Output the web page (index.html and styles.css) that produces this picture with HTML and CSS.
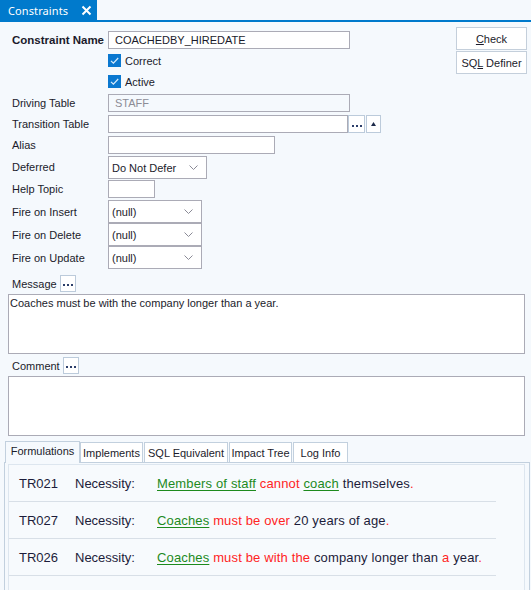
FILE: index.html
```html
<!DOCTYPE html>
<html>
<head>
<meta charset="utf-8">
<link rel="stylesheet" href="styles.css">
</head>
<body>
<div class="tabbar">
  <div class="doc-tab"><span class="doc-title">Constraints</span>
    <svg class="close" width="11" height="11" viewBox="0 0 11 11"><path d="M1.5 1.5 L9.5 9.5 M9.5 1.5 L1.5 9.5" stroke="#fff" stroke-width="2"/></svg>
  </div>
</div>
<div class="page">
  <div class="top">
    <div class="form">
      <div class="row r-name">
        <span class="label bold">Constraint Name</span>
        <div class="input w242">COACHEDBY_HIREDATE</div>
      </div>
      <div class="row r-check">
        <span class="label"></span>
        <span class="cb"><svg width="13" height="13" viewBox="0 0 13 13"><path d="M3 6.8 L5.4 9.2 L10.2 4" fill="none" stroke="#d8ecfb" stroke-width="1.2"/></svg></span>
        <span class="cb-text">Correct</span>
      </div>
      <div class="row r-check">
        <span class="label"></span>
        <span class="cb"><svg width="13" height="13" viewBox="0 0 13 13"><path d="M3 6.8 L5.4 9.2 L10.2 4" fill="none" stroke="#d8ecfb" stroke-width="1.2"/></svg></span>
        <span class="cb-text">Active</span>
      </div>
      <div class="row r-input first-input">
        <span class="label">Driving Table</span>
        <div class="input w242 disabled">STAFF</div>
      </div>
      <div class="row r-input">
        <span class="label">Transition Table</span>
        <div class="input w240"></div>
        <div class="ellipsis tall"><svg width="10" height="2" viewBox="0 0 10 2"><rect x="0" y="0" width="2" height="2" fill="#2c3e6a"/><rect x="4" y="0" width="2" height="2" fill="#2c3e6a"/><rect x="8" y="0" width="2" height="2" fill="#2c3e6a"/></svg></div>
        <div class="updown"><svg width="5" height="4" viewBox="0 0 5 4"><path d="M2.5 0 L5 4 L0 4 Z" fill="#1d2a4a"/></svg></div>
      </div>
      <div class="row r-input r-alias">
        <span class="label">Alias</span>
        <div class="input w167"></div>
      </div>
      <div class="row r-defer">
        <span class="label">Deferred</span>
        <div class="select w99"><span>Do Not Defer</span><svg class="chev" width="9" height="5" viewBox="0 0 9 5"><path d="M0.5 0.5 L4.5 4.5 L8.5 0.5" fill="none" stroke="#8a8a96" stroke-width="1"/></svg></div>
      </div>
      <div class="row r-help">
        <span class="label">Help Topic</span>
        <div class="input w47"></div>
      </div>
      <div class="row r-select">
        <span class="label">Fire on Insert</span>
        <div class="select w94"><span>(null)</span><svg class="chev" width="9" height="5" viewBox="0 0 9 5"><path d="M0.5 0.5 L4.5 4.5 L8.5 0.5" fill="none" stroke="#8a8a96" stroke-width="1"/></svg></div>
      </div>
      <div class="row r-select">
        <span class="label">Fire on Delete</span>
        <div class="select w94"><span>(null)</span><svg class="chev" width="9" height="5" viewBox="0 0 9 5"><path d="M0.5 0.5 L4.5 4.5 L8.5 0.5" fill="none" stroke="#8a8a96" stroke-width="1"/></svg></div>
      </div>
      <div class="row r-select">
        <span class="label">Fire on Update</span>
        <div class="select w94"><span>(null)</span><svg class="chev" width="9" height="5" viewBox="0 0 9 5"><path d="M0.5 0.5 L4.5 4.5 L8.5 0.5" fill="none" stroke="#8a8a96" stroke-width="1"/></svg></div>
      </div>
    </div>
    <div class="side">
      <div class="btn"><span><u>C</u>heck</span></div>
      <div class="btn"><span>SQ<u>L</u> Definer</span></div>
    </div>
  </div>

  <div class="memo">
    <div class="memo-head">
      <span class="memo-label">Message</span>
      <div class="ellipsis small"><svg width="10" height="2" viewBox="0 0 10 2"><rect x="0" y="0" width="2" height="2" fill="#2c3e6a"/><rect x="4" y="0" width="2" height="2" fill="#2c3e6a"/><rect x="8" y="0" width="2" height="2" fill="#2c3e6a"/></svg></div>
    </div>
    <div class="textarea">Coaches must be with the company longer than a year.</div>
    <div class="memo-head second">
      <span class="memo-label">Comment</span>
      <div class="ellipsis small"><svg width="10" height="2" viewBox="0 0 10 2"><rect x="0" y="0" width="2" height="2" fill="#2c3e6a"/><rect x="4" y="0" width="2" height="2" fill="#2c3e6a"/><rect x="8" y="0" width="2" height="2" fill="#2c3e6a"/></svg></div>
    </div>
    <div class="textarea"></div>
  </div>

  <div class="tabs">
    <div class="tab active t1">Formulations</div>
    <div class="tab t2">Implements</div>
    <div class="tab t3">SQL Equivalent</div>
    <div class="tab t4">Impact Tree</div>
    <div class="tab t5">Log Info</div>
  </div>
  <div class="panel">
    <div class="inner">
      <div class="frow">
        <span class="code">TR021</span><span class="kind">Necessity:</span>
        <span class="stmt"><span class="g">Members of staff</span> <span class="r">cannot</span> <span class="g">coach</span> themselves<span class="r">.</span></span>
      </div>
      <div class="frow">
        <span class="code">TR027</span><span class="kind">Necessity:</span>
        <span class="stmt"><span class="g">Coaches</span> <span class="r">must be over</span> 20 years of age<span class="r">.</span></span>
      </div>
      <div class="frow">
        <span class="code">TR026</span><span class="kind">Necessity:</span>
        <span class="stmt"><span class="g">Coaches</span> <span class="r">must be with the</span> company longer than <span class="r">a</span> year<span class="r">.</span></span>
      </div>
    </div>
  </div>
</div>
</body>
</html>
```
FILE: styles.css
```css
* { box-sizing: border-box; }
html, body { margin: 0; padding: 0; }
body {
  background: #f5f9fd;
  font-family: "Liberation Sans", Arial, sans-serif;
  font-size: 11px;
  color: #1b1b2b;
  width: 531px;
  height: 590px;
  overflow: hidden;
}
.tabbar {
  height: 22px;
  border-bottom: 2px solid #007acc;
  background: #f5f9fd;
  display: flex;
}
.doc-tab {
  width: 97px;
  height: 20px;
  background: #007acc;
  color: #fff;
  display: flex;
  align-items: center;
  padding-left: 8px;
  gap: 13px;
}
.doc-title {
  font-family: "Noto Sans", "Open Sans", sans-serif;
  font-size: 11px;
  letter-spacing: 0.1px;
}
.close { margin-top: 1px; }

.top {
  display: flex;
  padding: 5px 4px 0 0;
}
.form {
  flex: 1;
  padding-top: 4px;
  padding-left: 12px;
}
.side {
  width: 71px;
  display: flex;
  flex-direction: column;
  gap: 1px;
}
.btn {
  height: 23px;
  background: #fff;
  border: 1px solid #c4cfdb;
  display: flex;
  align-items: center;
  justify-content: center;
  font-size: 11px;
  color: #1b1b2b;
}
.row {
  display: flex;
  align-items: center;
}
.label { width: 96px; flex: none; }
.bold { font-weight: bold; font-size: 11.5px; }
.r-name { height: 19px; align-items: flex-start; }
.r-name .label { line-height: 18px; }
.r-input { height: 21px; align-items: flex-start; }
.r-input .label { line-height: 18px; }
.r-alias { height: 20px; }
.r-check { height: 21px; }
.first-input { margin-top: 2px; }
.r-select { height: 23px; }
.r-defer { height: 24px; align-items: flex-start; }
.r-defer .label { line-height: 23px; }
.r-help { height: 20px; align-items: flex-start; }
.r-help .label { line-height: 18px; }
.input {
  height: 18px;
  background: #fff;
  border: 1px solid #ababb6;
  padding-left: 6px;
  line-height: 16px;
  color: #1b1b2b;
}
.input.disabled { color: #8c8c96; background: #f5f9fd; }
.w242 { width: 242px; }
.w240 { width: 240px; }
.w167 { width: 167px; }
.w47 { width: 47px; }
.w99 { width: 99px; }
.w94 { width: 94px; }
.cb {
  width: 13px;
  height: 13px;
  background: #0a78d0;
  display: block;
  flex: none;
}
.cb svg { display: block; }
.cb-text { margin-left: 4px; }
.select {
  height: 23px;
  background: #fff;
  border: 1px solid #ababb6;
  display: flex;
  align-items: center;
  justify-content: space-between;
  padding: 0 8px 0 3px;
}
.chev { display: block; }
.ellipsis {
  background: #fff;
  border: 1px solid #bccbdb;
  display: flex;
  align-items: flex-end;
  justify-content: center;
}
.ellipsis svg { display: block; }
.ellipsis.tall {
  width: 17px;
  height: 18px;
  padding-bottom: 5px;
}
.updown {
  width: 15px;
  height: 18px;
  margin-left: 1px;
  background: #fff;
  border: 1px solid #bccbdb;
  display: flex;
  align-items: center;
  justify-content: center;
}
.updown svg { display: block; }
.ellipsis.small {
  width: 16px;
  height: 17px;
  padding-bottom: 5px;
  margin-left: 3px;
}

.memo {
  padding: 0 6px 0 8px;
}
.memo-head {
  display: flex;
  align-items: center;
  height: 17px;
  margin-top: 6px;
  padding-left: 4px;
}
.memo-head.second { margin-top: 3px; }
.textarea {
  margin-top: 2px;
  height: 60px;
  background: #fff;
  border: 1px solid #ababb6;
  padding: 2px 1px;
  line-height: 13px;
}

.tabs {
  display: flex;
  height: 20px;
  margin-top: 6px;
  padding-left: 5px;
  position: relative;
  z-index: 1;
}
.tab {
  height: 20px;
  background: #fff;
  border: 1px solid #c2d0de;
  border-bottom: none;
  display: flex;
  align-items: center;
  justify-content: center;
  font-size: 11px;
  color: #1b1b2b;
  margin-right: 1px;
}
.tab.active {
  background: #f5f9fd;
  height: 22px;
  margin-top: -1px;
  margin-right: 0;
  align-items: flex-start;
  padding-top: 3px;
}
.t1 { width: 75px; }
.t2 { width: 63px; }
.t3 { width: 84px; }
.t4 { width: 63px; }
.t5 { width: 55px; }

.panel {
  margin: 0 1px 0 4px;
  border: 1px solid #c2d0de;
  border-bottom: none;
  padding: 1px 4px 0 3px;
  height: 128px;
  background: #f5f9fd;
}
.inner {
  border: 1px solid #dde6ef;
  border-bottom: none;
  height: 127px;
  background: #f7fafd;
}
.frow {
  width: 487px;
  height: 37px;
  border-bottom: 1px solid #d8dfe7;
  display: flex;
  align-items: center;
  padding-left: 10px;
  font-size: 13px;
  color: #1c1c3a;
}
.code { width: 56px; flex: none; }
.kind { width: 82px; flex: none; }
.stmt { white-space: nowrap; letter-spacing: 0.15px; }
.g { color: #1d8a1d; text-decoration: underline; text-underline-offset: 2px; }
.r { color: #ff2424; }
```
